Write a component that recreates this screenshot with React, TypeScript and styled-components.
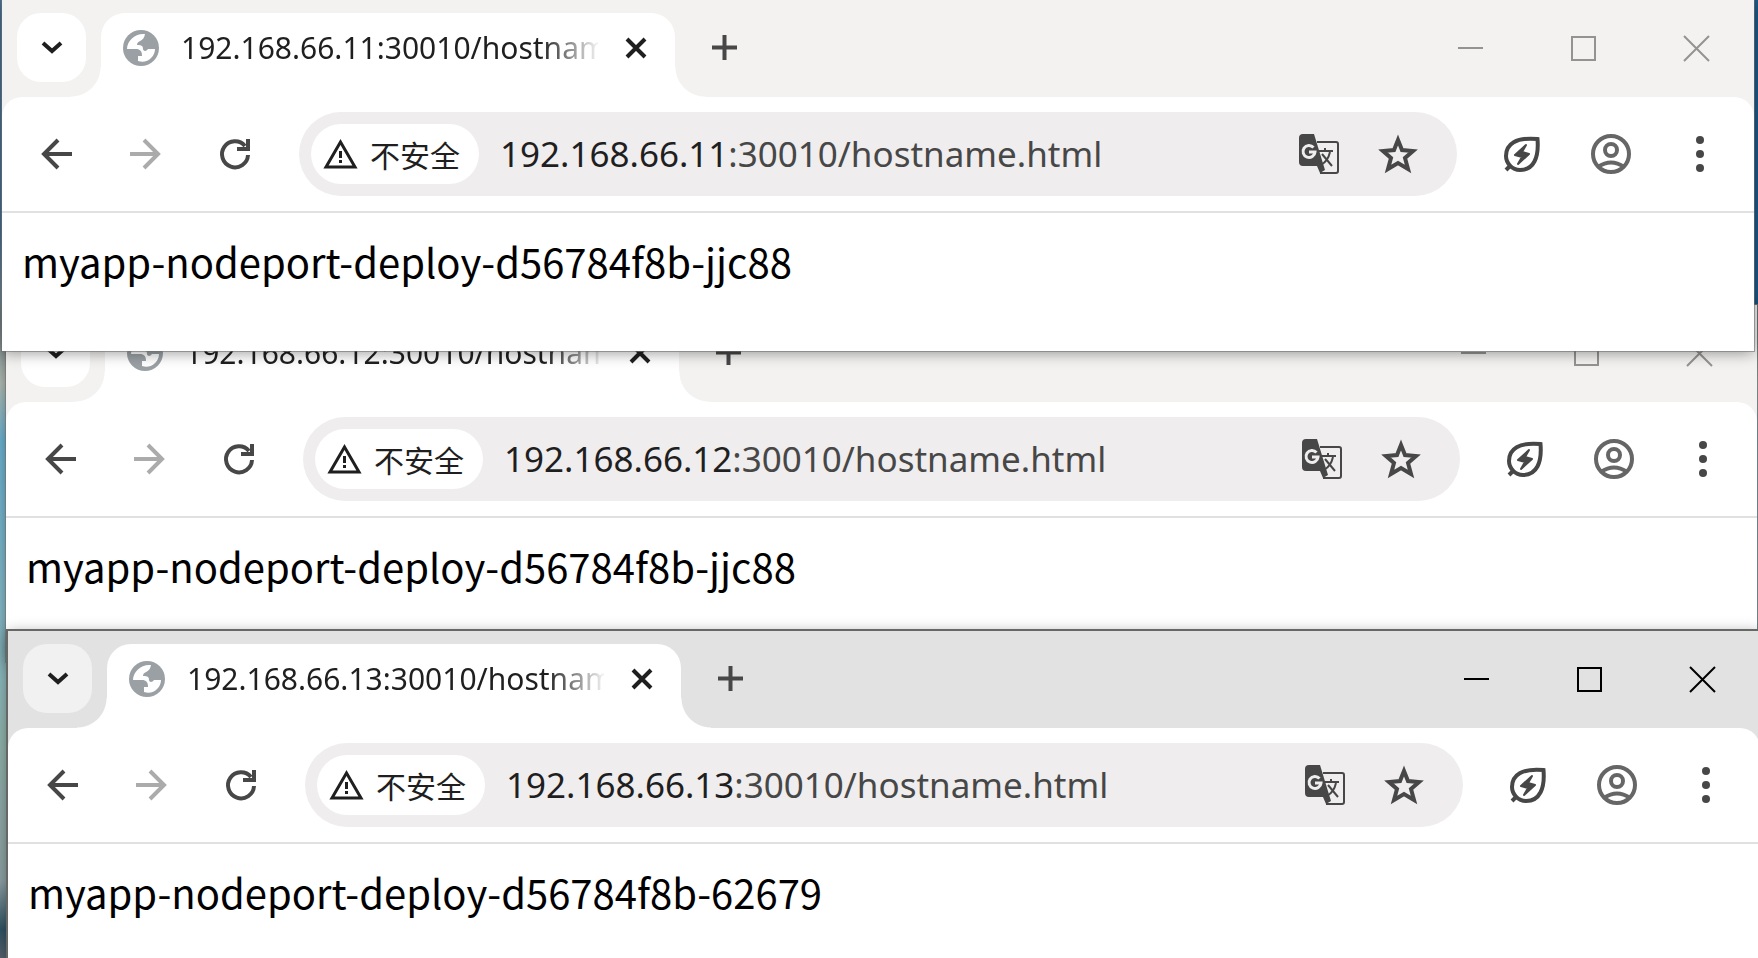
import React from 'react';
import styled, { createGlobalStyle } from 'styled-components';

const Global = createGlobalStyle`
  * { box-sizing: border-box; }
  html, body, #root { height: 100%; }
  body { margin: 0; overflow: hidden; font-family: "Noto Sans", "Noto Sans CJK SC", sans-serif; }
  button { border: 0; padding: 0; background: none; color: inherit; font: inherit; }
`;

const Desktop = styled.main`
  position: relative;
  height: 100%;
  overflow: hidden;
  background: linear-gradient(180deg, #47729b 0, #44709a 24%, #7f8f94 34%, #b3bdb5 40%, #6cb4d4 46%, #86bccb 64%, #8fb0a8 78%, #8b9ea2 92%, #2f5262 97%, #55606c 100%);
`;

const SkyEdge = styled.div`
  position: absolute;
  top: 0;
  right: 0;
  width: 60px;
  height: 304px;
  background: #1c5a88;
`;

const Window = styled.section<{ $x: number; $y: number; $z: number; $h?: number; $active?: boolean }>`
  position: absolute;
  left: ${p => p.$x}px;
  right: ${p => Math.max(6 - p.$x, p.$active ? -2 : 1)}px;
  top: ${p => p.$y}px;
  height: ${p => (p.$h ? p.$h + 'px' : 'auto')};
  z-index: ${p => p.$z};
  display: flex;
  flex-direction: column;
  background: #fff;
  outline: ${p => (p.$active ? '2px solid #656865' : '1px solid rgba(110, 112, 112, 0.6)')};
  box-shadow: 0 2px 14px rgba(0, 0, 0, 0.4);
`;

const TabStrip = styled.header<{ $active?: boolean }>`
  --strip: ${p => (p.$active ? '#e2e2e2' : '#f3f2f1')};
  display: flex;
  flex: none;
  height: 97px;
  padding: 13px 0 0 15px;
  background: var(--strip);
`;

const TabSearch = styled.button<{ $active?: boolean }>`
  position: relative;
  z-index: 1;
  display: grid;
  place-items: center;
  width: 69px;
  height: 69px;
  border-radius: 24px;
  background: ${p => (p.$active ? '#f1f1f1' : '#fff')};
`;

const Tab = styled.div`
  position: relative;
  display: flex;
  align-items: center;
  width: 574px;
  height: 84px;
  margin-left: 15px;
  padding: 0 29px 14px 22px;
  border-radius: 24px 24px 0 0;
  background: #fff;
  &::before, &::after {
    content: "";
    position: absolute;
    bottom: 0;
    width: 30px;
    height: 30px;
  }
  &::before { right: 100%; background: radial-gradient(circle at 0 0, var(--strip) 29px, #fff 30px); }
  &::after { left: 100%; background: radial-gradient(circle at 100% 0, var(--strip) 29px, #fff 30px); }
`;

const TabTitle = styled.span`
  flex: 1;
  margin-left: 22px;
  margin-right: 28px;
  overflow: hidden;
  white-space: nowrap;
  font-size: 30px;
  line-height: 40px;
  color: #1f1f1f;
  mask-image: linear-gradient(90deg, #000 360px, transparent 420px);
`;

const StripButton = styled.button`
  display: grid;
  place-items: center;
  color: #1f1f1f;
`;

const NewTab = styled(StripButton)`
  width: 50px;
  height: 69px;
  margin-left: 24px;
  color: #474747;
`;

const Captions = styled.div<{ $active?: boolean }>`
  display: flex;
  gap: 88px;
  height: 69px;
  margin: 1px 45px 0 auto;
  color: ${p => (p.$active ? '#000' : '#949392')};
`;

const ToolbarBack = styled.div<{ $active?: boolean }>`
  flex: none;
  background: ${p => (p.$active ? '#e2e2e2' : '#f3f2f1')};
`;

const Toolbar = styled.nav`
  display: flex;
  align-items: center;
  height: 116px;
  padding: 0 46px 0 35px;
  border-radius: 20px 20px 0 0;
  border-bottom: 2px solid #e1e1e1;
  background: #fff;
  color: #474747;
`;

const ToolButton = styled.button<{ $gap?: number }>`
  display: grid;
  place-items: center;
  flex: none;
  width: 40px;
  height: 40px;
  margin-right: ${p => p.$gap ?? 0}px;
  &:disabled { color: #ababab; }
`;

const MenuButton = styled(ToolButton)`
  width: 16px;
`;

const Omnibox = styled.div`
  display: flex;
  flex: 1;
  align-items: center;
  height: 84px;
  margin-right: 45px;
  padding: 0 39px 0 12px;
  border-radius: 42px;
  background: #efedee;
`;

const Security = styled.button`
  display: flex;
  align-items: center;
  gap: 12px;
  height: 60px;
  padding: 0 19px 0 12px;
  border-radius: 30px;
  background: #fff;
  color: #1f1f1f;
  font-family: "Noto Sans CJK SC", sans-serif;
  font-size: 30px;
  line-height: 60px;
  white-space: nowrap;
`;

const Address = styled.a`
  flex: 1;
  margin-left: 21px;
  font-size: 35px;
  line-height: 48px;
  color: #474747;
  text-decoration: none;
  white-space: nowrap;
`;

const Host = styled.span`
  color: #1f1f1f;
`;

const Page = styled.p`
  margin: 0;
  padding: 20px 20px 68px;
  font-family: "Noto Sans CJK SC", sans-serif;
  font-size: 40px;
  line-height: 56px;
  white-space: nowrap;
  color: #000;
`;

const Svg = styled.svg`
  display: block;
  flex: none;
  overflow: visible;
`;

const Globe = () => (
  <Svg width="36" height="36" viewBox="0 0 36 36">
    <circle cx="18" cy="18" r="18" fill="#9aa0a4" />
    <path fill="#fff" d="M22 4C12 3 4 11 4 19h9c4 0 6 2 6 7h-4v5c9 3 17-4 17-12h-7c-2 3-5 2-5 0 0-3-1-4-6-4 0-5 7-3 8-11Z" />
  </Svg>
);

const Translate = () => (
  <Svg width="40" height="40" viewBox="0 0 40 40">
    <path fill="none" stroke="currentColor" strokeWidth="2" d="M18 8h19q2 0 2 2v27q0 2-2 2H21" />
    <path fill="currentColor" d="M4 0h11l11 36-5 3-3-7H4q-4 0-4-4V4q0-4 4-4Z" />
    <path fill="none" stroke="#efedee" strokeWidth="3" d="M14.500 13.500a6 6 0 1 0 1.500 4.500h-6" />
    <path fill="none" stroke="currentColor" strokeWidth="2" d="M20 17h14M26 14v3M31 18q-2 9-9 13M23 20l10 12" />
  </Svg>
);

const Leaf = () => (
  <Svg width="36" height="36" viewBox="0 0 36 36" fill="none" stroke="currentColor">
    <path strokeWidth="4" d="M33.500 3C12 1 2 8 2 20c0 7 6 14 14 14 14 0 19-13 17.500-31ZM6 30l-4 4" />
    <path fill="currentColor" strokeWidth="2" strokeLinejoin="round" d="M22 9 11 19l7 2-4 7 11-10-7-2 4-7Z" />
  </Svg>
);

const Profile = () => (
  <Svg width="40" height="40" viewBox="0 0 40 40" fill="none" stroke="#666" strokeWidth="4">
    <circle cx="20" cy="20" r="18" />
    <circle cx="20" cy="16" r="6" />
    <path d="M7 33q13-9 26 0" />
  </Svg>
);

const captionIcons = [
  { label: 'Minimize', d: 'M0 12h25' },
  { label: 'Maximize', d: 'M1 1h23v23H1Z' },
  { label: 'Close', d: 'm0 0 25 25M25 0 0 25' },
];

type WindowProps = { host: string; body: string; x: number; y: number; z: number; h?: number; active?: boolean };

function BrowserWindow({ host, body, x, y, z, h, active }: WindowProps) {
  const path = ':30010/hostname.html';
  return (
    <Window $x={x} $y={y} $z={z} $h={h} $active={active}>
      <TabStrip $active={active}>
        <TabSearch $active={active} aria-label="Search tabs">
          <Svg width="22" height="14" viewBox="0 0 22 14" fill="none" stroke="#1f1f1f" strokeWidth="4"><path d="m2 2 9 8 9-8" /></Svg>
        </TabSearch>
        <Tab>
          <Globe />
          <TabTitle>{host + path}</TabTitle>
          <StripButton aria-label="Close tab">
            <Svg width="20" height="20" viewBox="0 0 20 20" stroke="currentColor" strokeWidth="4"><path d="m1 1 18 18M19 1 1 19" /></Svg>
          </StripButton>
        </Tab>
        <NewTab aria-label="New tab">
          <Svg width="25" height="25" viewBox="0 0 25 25" stroke="currentColor" strokeWidth="4"><path d="M12.5 0v25M0 12.5h25" /></Svg>
        </NewTab>
        <Captions $active={active}>
          {captionIcons.map(({ label, d }) => (
            <button key={label} aria-label={label}>
              <Svg width="25" height="25" viewBox="0 0 25 25" fill="none" stroke="currentColor" strokeWidth="2"><path d={d} /></Svg>
            </button>
          ))}
        </Captions>
      </TabStrip>
      <ToolbarBack $active={active}>
        <Toolbar>
          <ToolButton $gap={48} aria-label="Back">
            <Svg width="30" height="30" viewBox="0 0 30 30" fill="none" stroke="currentColor" strokeWidth="4"><path d="M30 15H3M16 1 2 15l14 14" /></Svg>
          </ToolButton>
          <ToolButton $gap={50} disabled aria-label="Forward">
            <Svg width="30" height="30" viewBox="0 0 30 30" fill="none" stroke="currentColor" strokeWidth="4"><path d="M0 15h27M14 1l14 14-14 14" /></Svg>
          </ToolButton>
          <ToolButton $gap={44} aria-label="Reload">
            <Svg width="30" height="30" viewBox="0 0 30 30" fill="none" stroke="currentColor" strokeWidth="4"><path d="M28 16A13 13 0 1 1 25 7M28 0v10H17" /></Svg>
          </ToolButton>
          <Omnibox>
            <Security>
              <Svg width="35" height="30" viewBox="0 0 35 30" fill="none" stroke="currentColor" strokeWidth="3"><path d="M17.500 3 32 28H3ZM17.500 12v7M17.500 21v3" /></Svg>
              不安全
            </Security>
            <Address href="#"><Host>{host}</Host>{path}</Address>
            <ToolButton $gap={39} aria-label="Translate"><Translate /></ToolButton>
            <ToolButton aria-label="Bookmark">
              <Svg width="40" height="38" viewBox="0 0 40 38" fill="none" stroke="currentColor" strokeWidth="4"><path d="m20 5 4 10 11 1-8 7 3 11-10-6-10 6 3-11-8-7 11-1Z" /></Svg>
            </ToolButton>
          </Omnibox>
          <ToolButton $gap={49} aria-label="Energy saver"><Leaf /></ToolButton>
          <ToolButton $gap={61} aria-label="Profile"><Profile /></ToolButton>
          <MenuButton aria-label="Menu">
            <Svg width="8" height="36" viewBox="0 0 8 36" fill="currentColor"><circle cx="4" cy="4" r="4" /><circle cx="4" cy="18" r="4" /><circle cx="4" cy="32" r="4" /></Svg>
          </MenuButton>
        </Toolbar>
      </ToolbarBack>
      <Page>{body}</Page>
    </Window>
  );
}

export default function App() {
  return (
    <Desktop>
      <Global />
      <SkyEdge />
      <BrowserWindow x={2} y={0} z={2} h={351} host="192.168.66.11" body="myapp-nodeport-deploy-d56784f8b-jjc88" />
      <BrowserWindow x={6} y={305} z={1} host="192.168.66.12" body="myapp-nodeport-deploy-d56784f8b-jjc88" />
      <BrowserWindow x={8} y={631} z={3} active host="192.168.66.13" body="myapp-nodeport-deploy-d56784f8b-62679" />
    </Desktop>
  );
}
